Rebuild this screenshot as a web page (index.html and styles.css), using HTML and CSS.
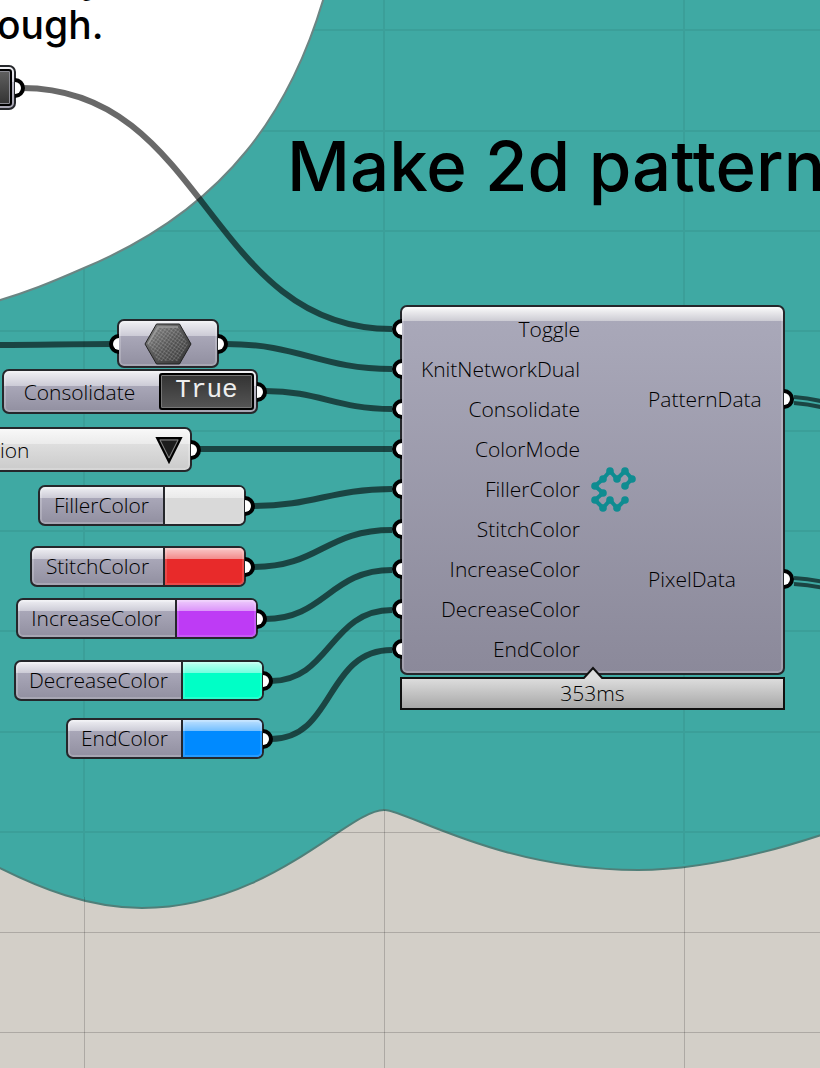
FILE: index.html
```html
<!DOCTYPE html>
<html lang="en">
<head>
<meta charset="utf-8">
<title>Make 2d pattern</title>
<link rel="stylesheet" href="styles.css">
</head>
<body>
<main class="canvas">
  <svg class="scene" width="820" height="1068" aria-hidden="true">
    <path class="group" d="M-10 -10H830V832C765 854 700 870 638 870C500 870 408 811 385 810C350 808 270 908 142 908C90 908 40 889 -10 863Z"/>
    <path class="grid" d="M84 0V810M384 0V810M684 0V864M0 30H820M0 131H820M0 231H820M0 331H820M0 431H820M0 531H820M0 631H820M0 732H820M0 832H330M440 832H820M84 810V897M684 810V864"/>
    <path class="grid bare" d="M84.500 897V1068M384.500 810V1068M684.500 867V1068M330 832.500H440M0 932.500H820M0 1032.500H820"/>
    <path class="note-area" d="M-10 -10H326C293 108 228 208 84 268C52 282 26 293 -10 303Z"/>
    <g class="wires">
      <path d="M22 88C206 88 208 329 392 329"/>
      <path d="M-2 345C40 345 70 344 112 344"/>
      <path d="M226 344C300 344 320 369 392 369"/>
      <path d="M265 391C320 391 335 409 392 409"/>
      <path d="M199 449H392"/>
      <path d="M253 506C315 506 330 489 392 489"/>
      <path d="M253 567C320 567 325 530 392 530"/>
      <path d="M265 619C325 619 330 570 392 570"/>
      <path d="M271 681C330 681 330 610 392 610"/>
      <path d="M271 739C335 739 325 650 392 650"/>
    </g>
    <g class="wires thin">
      <path d="M794 397Q810 398 824 402"/><path d="M794 403Q810 404 824 408"/>
      <path d="M794 578Q810 579 824 582"/><path d="M794 584Q810 585 824 588"/>
    </g>
  </svg>

  <p class="note"><span class="note-line">y</span><span class="note-line">ough.</span></p>
  <h1 class="title">Make 2d pattern</h1>

  <div class="node start"><span class="start-face"></span><i class="port out"></i></div>

  <div class="node geometry">
    <i class="port in"></i>
    <svg width="48" height="44" viewBox="0 0 48 44" role="img" aria-label="Mesh">
      <defs>
        <linearGradient id="steel" x1="0" y1="0" x2="1" y2="1"><stop offset="0" stop-color="#8a8a8a"/><stop offset=".5" stop-color="#555"/><stop offset="1" stop-color="#333"/></linearGradient>
        <pattern id="mesh" width="3" height="3" patternUnits="userSpaceOnUse" patternTransform="rotate(35)"><path d="M0 0H3M0 0V3" stroke="#fff" stroke-opacity=".3"/></pattern>
      </defs>
      <path d="M12.500 2H35.500L47 22L35.500 42H12.500L1 22Z" fill="url(#steel)" stroke="#222"/>
      <path d="M14 5H34L44 22L34 39H14L4 22Z" fill="url(#mesh)"/>
      <path d="M4 22L14 5H34" fill="none" stroke="#999" stroke-width="1.500"/>
    </svg>
    <i class="port out"></i>
  </div>

  <div class="node consolidate">
    <label class="name" for="consolidate">Consolidate</label>
    <button class="toggle" id="consolidate" type="button">True</button>
    <i class="port out"></i>
  </div>

  <div class="node mode">
    <select class="mode-list" aria-label="ColorMode"><option>ion</option></select>
    <svg class="arrow" width="28" height="28" viewBox="0 0 28 28" aria-hidden="true"><path d="M2 2H26L14 26Z" fill="#222" stroke="#000" stroke-width="2"/><path d="M5 4H23L14 22Z" fill="#1c1c1c" stroke="#888"/></svg>
    <i class="port out"></i>
  </div>

  <div class="node color filler"><label class="name" for="c1">FillerColor</label><button class="swatch grey" id="c1" type="button"></button><i class="port out"></i></div>
  <div class="node color stitch"><label class="name" for="c2">StitchColor</label><button class="swatch red" id="c2" type="button"></button><i class="port out"></i></div>
  <div class="node color increase"><label class="name" for="c3">IncreaseColor</label><button class="swatch violet" id="c3" type="button"></button><i class="port out"></i></div>
  <div class="node color decrease"><label class="name" for="c4">DecreaseColor</label><button class="swatch green" id="c4" type="button"></button><i class="port out"></i></div>
  <div class="node color end"><label class="name" for="c5">EndColor</label><button class="swatch blue" id="c5" type="button"></button><i class="port out"></i></div>

  <section class="component">
    <div class="node body">
      <ul class="inputs">
        <li>Toggle<i class="port in"></i></li>
        <li>KnitNetworkDual<i class="port in"></i></li>
        <li>Consolidate<i class="port in"></i></li>
        <li>ColorMode<i class="port in"></i></li>
        <li>FillerColor<i class="port in"></i></li>
        <li>StitchColor<i class="port in"></i></li>
        <li>IncreaseColor<i class="port in"></i></li>
        <li>DecreaseColor<i class="port in"></i></li>
        <li>EndColor<i class="port in"></i></li>
      </ul>
      <svg class="knit" width="46" height="46" viewBox="0 0 46 46" role="img" aria-label="Knit">
        <path d="M35 20L42 13L35 5L27 13L20 5L13 13L5 20L13 27L5 34L13 42L20 34L27 42L35 34" fill="none" stroke="#0f8c91" stroke-width="4"/>
        <g fill="#0f8c91"><circle cx="35" cy="20" r="3.800"/><circle cx="42" cy="13" r="3.800"/><circle cx="35" cy="5" r="3.800"/><circle cx="27" cy="13" r="3.800"/><circle cx="20" cy="5" r="3.800"/><circle cx="13" cy="13" r="3.800"/><circle cx="5" cy="20" r="3.800"/><circle cx="13" cy="27" r="3.800"/><circle cx="5" cy="34" r="3.800"/><circle cx="13" cy="42" r="3.800"/><circle cx="20" cy="34" r="3.800"/><circle cx="27" cy="42" r="3.800"/><circle cx="35" cy="34" r="3.800"/></g>
      </svg>
      <ul class="outputs">
        <li>PatternData<i class="port out"></i></li>
        <li>PixelData<i class="port out"></i></li>
      </ul>
    </div>
    <div class="timer">353ms
      <svg class="notch" width="24" height="13" viewBox="0 0 24 13" aria-hidden="true"><path d="M2 13L12 2L22 13" fill="#dcdcdc" stroke="#111" stroke-width="2"/></svg>
    </div>
  </section>
</main>
</body>
</html>
```
FILE: styles.css
```css
* { box-sizing: border-box; }
body {
  margin: 0;
  font-family: "Open Sans", "Noto Sans", sans-serif;
  font-weight: 300;
  font-size: 21px;
  line-height: 24px;
  color: #000;
}
button, select { font: inherit; color: inherit; margin: 0; padding: 0; }
ul { list-style: none; margin: 0; padding: 0; }

.canvas {
  position: relative;
  min-height: 100vh;
  overflow: hidden;
  background: #d3cfc8;
}
.scene { position: absolute; left: 0; top: 0; }
.group { fill: #3fa9a3; stroke: #4f7f79; stroke-width: 2; }
.grid { fill: none; stroke: #000; stroke-opacity: .06; stroke-width: 2; }
.bare { stroke-opacity: .18; stroke-width: 1; }
.note-area { fill: #fff; stroke: #6b8583; stroke-width: 2; }
.wires { fill: none; stroke: #000; stroke-opacity: .59; stroke-width: 6; }
.thin { stroke-width: 4; }

.note {
  position: absolute;
  left: -3px;
  top: -44px;
  margin: 0;
  font: 500 39px/46px Inter, sans-serif;
  text-align: right;
  color: #000;
}
.note-line { display: block; padding-right: 1px; }
.title {
  position: absolute;
  left: 287px;
  top: 124px;
  margin: 0;
  font: 500 69px/84px Inter, sans-serif;
  white-space: nowrap;
  color: #000;
}

.node {
  position: absolute;
  display: flex;
  align-items: stretch;
  border: 2px solid #25272b;
  border-radius: 7px;
  background: linear-gradient(#f0f0f4 0, #cccbd6 15px, #a9a7b8 15px, #918fa0 100%);
  box-shadow: inset 0 0 0 2px rgba(255, 255, 255, .2);
}
.name { flex: 1; text-align: center; align-self: center; }

.port {
  position: absolute;
  top: 50%;
  width: 10px;
  height: 20px;
  margin-top: -10px;
  border: 4px solid #000;
  background: #fff;
}
.port.out { right: -11px; border-left: 0; border-radius: 0 10px 10px 0; }
.port.in { left: -10px; border-right: 0; border-radius: 10px 0 0 10px; }

.start { left: -60px; top: 65px; width: 76px; height: 45px; padding: 2px; }
.start-face { flex: 1; border: 2px solid #000; border-radius: 3px; background: linear-gradient(#606060, #333); box-shadow: inset 0 0 0 1px #8b8b93; }
.geometry { left: 117px; top: 319px; width: 102px; height: 49px; justify-content: center; align-items: center; }
.consolidate { left: 2px; top: 369px; width: 256px; height: 45px; padding: 2px; }
.consolidate .name { padding-right: 6px; }
.toggle {
  width: 95px;
  border: 2px solid #000;
  border-radius: 3px;
  background: linear-gradient(#333, #555);
  box-shadow: inset 0 0 0 1px #777;
  color: #eee;
  font: 26px/28px "Liberation Mono", monospace;
  padding-bottom: 4px;
}
.mode { left: -60px; top: 427px; width: 252px; height: 45px; align-items: center; background: linear-gradient(#f8f8f8 0, #ebebeb 15px, #dedede 15px, #cbcbcb 100%); }
.mode-list { flex: 1; height: 41px; padding-left: 58px; border: 0; background: none; appearance: none; }
.arrow { position: absolute; right: 7px; top: 7px; }

.color { height: 41px; background: linear-gradient(#f0f0f4 0, #cccbd6 11px, #a9a7b8 11px, #918fa0 100%); }
.color .name { padding-bottom: 1px; }
.swatch {
  width: 81px;
  border: 0;
  border-left: 2px solid #25272b;
  border-radius: 0 5px 5px 0;
  box-shadow: inset 0 0 0 2px rgba(255, 255, 255, .15);
  background-image: linear-gradient(rgba(255, 255, 255, .75), rgba(255, 255, 255, .45) 11px, transparent 11px);
}
.grey { background-color: #d9d9d9; }
.red { background-color: #e82a2a; }
.violet { background-color: #be3bf5; }
.green { background-color: #00ffc6; }
.blue { background-color: #008aff; }
.filler { left: 38px; top: 485px; width: 208px; }
.stitch { left: 30px; top: 546px; width: 216px; }
.increase { left: 16px; top: 598px; width: 242px; }
.decrease { left: 14px; top: 660px; width: 250px; }
.end { left: 66px; top: 718px; width: 198px; }

.component { position: absolute; left: 400px; top: 305px; width: 385px; }
.body {
  position: relative;
  padding: 2px 0 4px;
  align-items: center;
  background: linear-gradient(#fafafa 0, #cccbd3 14px, #a9a8b9 14px, #8b899a 100%);
}
.inputs { width: 178px; }
.inputs li, .outputs li { position: relative; display: flex; align-items: center; }
.inputs li { height: 40px; justify-content: flex-end; }
.knit { margin-left: 10px; }
.outputs { flex: 1; padding-left: 12px; }
.outputs li { height: 180px; }
.timer {
  position: relative;
  margin-top: 2px;
  border: 2px solid #111;
  background: linear-gradient(#dcdcdc, #a8a8a8);
  text-align: center;
  line-height: 29px;
}
.notch { position: absolute; left: 50%; top: -13px; margin-left: -12px; }
```
